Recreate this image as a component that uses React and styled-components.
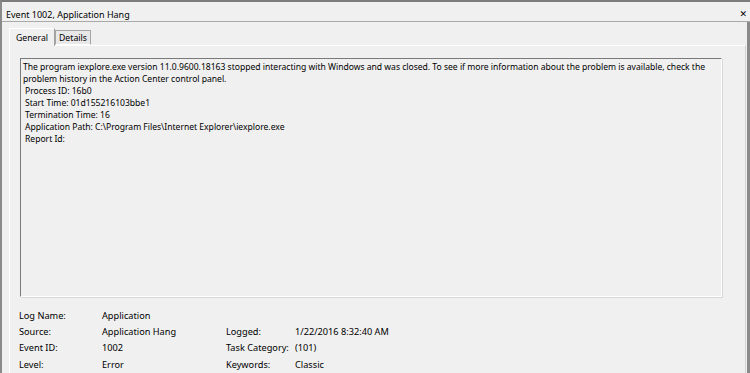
import React from 'react'
import styled, { createGlobalStyle } from 'styled-components'

const GlobalStyle = createGlobalStyle`
  html, body {
    margin: 0;
    padding: 0;
    background: #f0f0f0;
    overflow: hidden;
  }
  body {
    font-family: "Noto Sans", "Open Sans", sans-serif;
    color: #000;
  }
`

const Window = styled.div`
  width: 750px;
  height: 373px;
  box-sizing: border-box;
  border-top: 2px solid #7c7c7c;
  border-left: 2px solid #8a8a8a;
  background: #f0f0f0;
  overflow: hidden;
  display: flex;
  flex-direction: column;
`

const TitleBar = styled.div`
  height: 20px;
  box-sizing: border-box;
  flex: none;
  display: flex;
  align-items: flex-start;
  justify-content: space-between;
  padding: 8px 3px 0 4px;
  border-bottom: 1px solid #a9a9a9;
  font-size: 9px;
  line-height: 10px;
`

const Close = styled.span`
  font-family: "DejaVu Sans", sans-serif;
  font-weight: bold;
  font-size: 9px;
  line-height: 1;
`

const Body = styled.div`
  flex: 1;
  border-right: 3px solid #8a8a8a;
  padding: 6px 0 0 7px;
  display: flex;
  flex-direction: column;
`

const Tabs = styled.div`
  display: flex;
  align-items: flex-end;
  height: 17px;
  flex: none;
  position: relative;
  z-index: 1;
`

const Tab = styled.div`
  box-sizing: border-box;
  height: ${p => (p.$active ? '18px' : '15px')};
  padding: 0 ${p => (p.$active ? '6px' : '3px')};
  margin-bottom: ${p => (p.$active ? '-1px' : '0')};
  display: flex;
  align-items: center;
  font-size: 8.7px;
  background: ${p => (p.$active ? '#f0f0f0' : '#e8e8e8')};
  border: 1px solid ${p => (p.$active ? '#ffffff' : '#a5a5a5')};
  border-right-color: ${p => (p.$active ? '#a0a0a0' : '#a5a5a5')};
  border-bottom: ${p => (p.$active ? 'none' : '1px solid #ffffff')};
`

const Panel = styled.div`
  flex: 1;
  margin-right: 1px;
  border-top: 1px solid #ffffff;
  border-left: 1px solid #ffffff;
  border-right: 1px solid #d4d4d4;
  padding: 12px 0 0 10px;
  display: flex;
  flex-direction: column;
`

const Description = styled.div`
  width: 702px;
  height: 239px;
  box-sizing: border-box;
  border-top: 1px solid #7a7a7a;
  border-left: 1px solid #7a7a7a;
  border-bottom: 1px solid #ffffff;
  border-right: 1px solid #ffffff;
  box-shadow: 1px 1px 0 #d8d8d8;
  padding: 2px 2px;
  font-size: 8.6px;
  letter-spacing: -0.02px;
  line-height: 12px;
`

const Line = styled.div`
  padding-left: ${p => (p.$indent ? '2px' : '0')};
`

const Details = styled.div`
  margin-top: 10px;
  margin-left: -1px;
  display: grid;
  grid-template-columns: 83px 124px 69px 1fr;
  grid-auto-rows: 16.4px;
  align-items: center;
  font-size: 9.2px;
`

const Cell = styled.div`
  white-space: nowrap;
`

const rows = [
  ['Log Name:', 'Application', '', ''],
  ['Source:', 'Application Hang', 'Logged:', '1/22/2016 8:32:40 AM'],
  ['Event ID:', '1002', 'Task Category:', '(101)'],
  ['Level:', 'Error', 'Keywords:', 'Classic'],
]

export default function App() {
  return (
    <>
      <GlobalStyle />
      <Window>
        <TitleBar>
          <span>Event 1002, Application Hang</span>
          <Close>✕</Close>
        </TitleBar>
        <Body>
          <Tabs>
            <Tab $active>General</Tab>
            <Tab>Details</Tab>
          </Tabs>
          <Panel>
            <Description>
              <Line>
                The program iexplore.exe version 11.0.9600.18163 stopped interacting with Windows and was closed. To see if more information about the problem is available, check the problem history in the Action Center control panel.
              </Line>
              <Line $indent>Process ID: 16b0</Line>
              <Line $indent>Start Time: 01d155216103bbe1</Line>
              <Line $indent>Termination Time: 16</Line>
              <Line $indent>Application Path: C:\Program Files\Internet Explorer\iexplore.exe</Line>
              <Line $indent>Report Id:</Line>
            </Description>
            <Details>
              {rows.map(r => r.map((c, i) => <Cell key={r[0] + i}>{c}</Cell>))}
            </Details>
          </Panel>
        </Body>
      </Window>
    </>
  )
}
